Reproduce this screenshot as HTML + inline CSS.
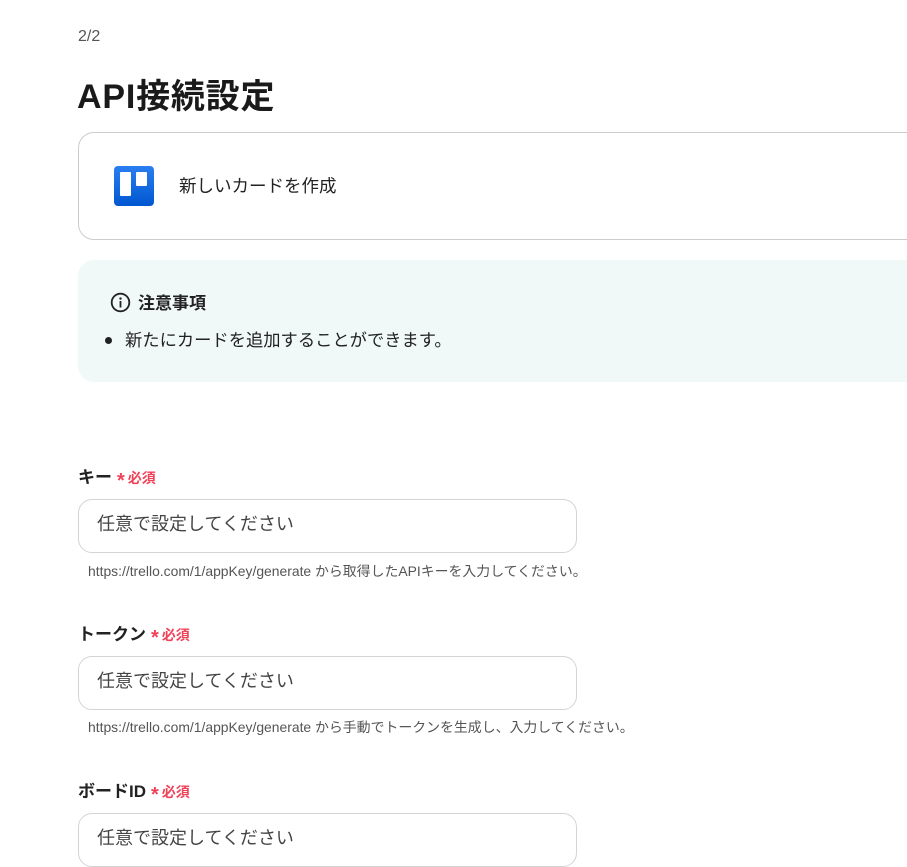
<!DOCTYPE html>
<html><head><meta charset="utf-8"><style>
body{margin:0;width:907px;height:854px;overflow:hidden;background:#fff;font-family:"Liberation Sans","Noto Sans CJK JP",sans-serif;color:#222;position:relative}
.a{position:absolute}
.inp{position:absolute;left:78px;width:499px;height:54px;border:1px solid #d4d4d8;border-radius:14px;box-sizing:border-box;font-size:18px;color:#444;padding-left:18px;line-height:49px}
.lab{position:absolute;left:78px;font-size:17px;font-weight:bold;color:#222}
.req{color:#f0435a;font-size:14px;font-weight:bold}
.star{color:#f0435a;font-size:20px;font-weight:bold;position:relative;top:4px;margin:0 3px 0 5px}
.hint{position:absolute;left:88px;font-size:13.9px;color:#555}
</style></head><body>
<div class="a" style="left:78px;top:28px;font-size:16px;color:#555">2/2</div>
<div class="a" style="left:77px;top:69px;font-size:34px;font-weight:bold;color:#1a1a1a;letter-spacing:0.8px">API接続設定</div>
<div class="a" style="left:78px;top:132px;width:860px;height:108px;border:1px solid #ccc;border-radius:16px;box-sizing:border-box"></div>
<div class="a" style="left:114px;top:166px;width:40px;height:40px;border-radius:4px;background:linear-gradient(#2a7ef0,#0057d0)">
<div class="a" style="left:6px;top:6px;width:11px;height:24px;background:#fff;border-radius:1px"></div>
<div class="a" style="left:22px;top:6px;width:11px;height:14px;background:#fff;border-radius:1px"></div></div>
<div class="a" style="left:179px;top:173px;font-size:17.5px">新しいカードを作成</div>
<div class="a" style="left:78px;top:260px;width:860px;height:122px;background:#f1f9f8;border-radius:16px"></div>
<svg class="a" style="left:110px;top:292px" width="21" height="21" viewBox="0 0 21 21"><circle cx="10.5" cy="10.5" r="8.8" fill="none" stroke="#222" stroke-width="1.8"/><circle cx="10.5" cy="6.6" r="1.2" fill="#222"/><rect x="9.6" y="9" width="1.8" height="6.5" fill="#222"/></svg>
<div class="a" style="left:138px;top:289px;font-size:17px;font-weight:bold">注意事項</div>
<div class="a" style="left:105px;top:337px;width:7px;height:7px;border-radius:50%;background:#222"></div>
<div class="a" style="left:125px;top:326px;font-size:17.3px">新たにカードを追加することができます。</div>
<div class="lab" style="top:463px">キー<span class="star">*</span><span class="req">必須</span></div>
<div class="inp" style="top:499px">任意で設定してください</div>
<div class="hint" style="top:561px">https://trello.com/1/appKey/generate から取得したAPIキーを入力してください。</div>
<div class="lab" style="top:620px">トークン<span class="star">*</span><span class="req">必須</span></div>
<div class="inp" style="top:656px">任意で設定してください</div>
<div class="hint" style="top:717px">https://trello.com/1/appKey/generate から手動でトークンを生成し、入力してください。</div>
<div class="lab" style="top:777px">ボードID<span class="star">*</span><span class="req">必須</span></div>
<div class="inp" style="top:813px">任意で設定してください</div>
</body></html>
